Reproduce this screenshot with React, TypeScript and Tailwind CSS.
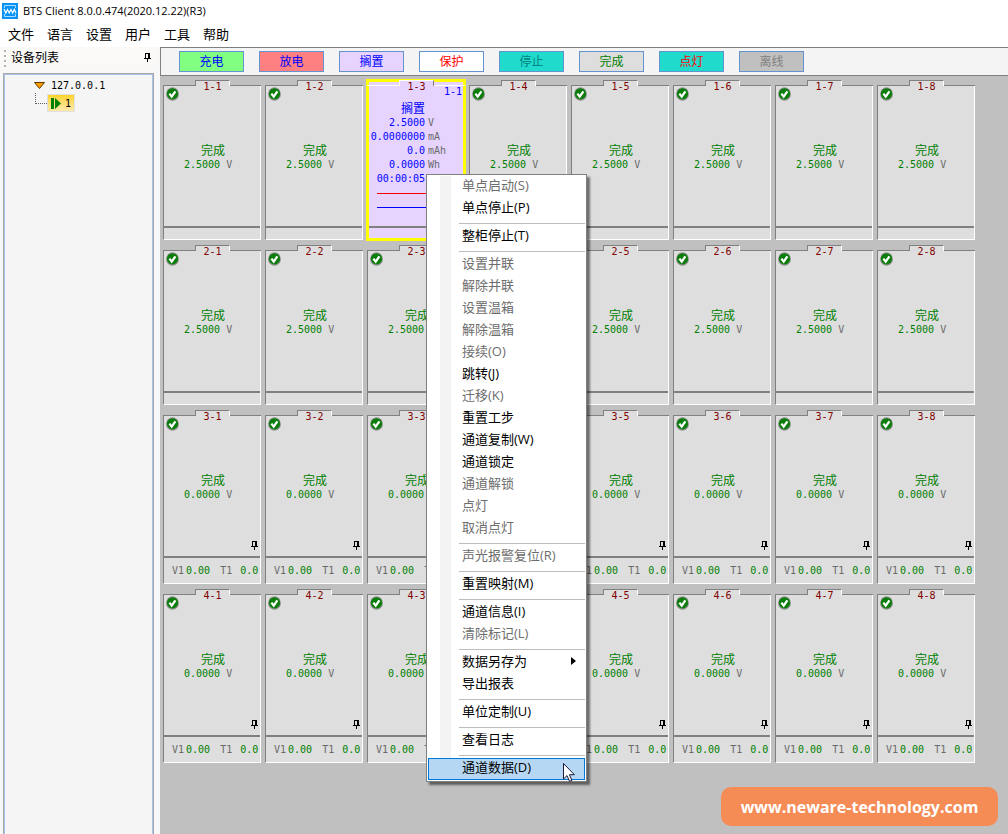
import type { ReactNode } from "react";

const MENUS = ["文件", "语言", "设置", "用户", "工具", "帮助"];

const STATES = [
  { label: "充电", style: "bg-[#80ff80] text-[#0000ff]" },
  { label: "放电", style: "bg-[#ff8080] text-[#0000ff]" },
  { label: "搁置", style: "bg-[#e6d4ff] text-[#0000ff]" },
  { label: "保护", style: "bg-white text-[#ff0000]" },
  { label: "停止", style: "bg-[#20dacb] text-[#008080]" },
  { label: "完成", style: "bg-[#dedede] text-[#008000]" },
  { label: "点灯", style: "bg-[#20dacb] text-[#ff0000]" },
  { label: "离线", style: "bg-[#c0c0c0] text-[#808080]" },
];

const ROWS = [
  { id: 1, voltage: "2.5000", aux: false },
  { id: 2, voltage: "2.5000", aux: false },
  { id: 3, voltage: "0.0000", aux: true },
  { id: 4, voltage: "0.0000", aux: true },
];

const COLUMNS = [1, 2, 3, 4, 5, 6, 7, 8];

const READINGS = [
  { name: "voltage", value: "2.5000", unit: "V" },
  { name: "current", value: "0.0000000", unit: "mA" },
  { name: "capacity", value: "0.0", unit: "mAh" },
  { name: "energy", value: "0.0000", unit: "Wh" },
  { name: "time", value: "00:00:05", unit: "" },
];

interface MenuEntry {
  label: string;
  disabled?: boolean;
  active?: boolean;
  submenu?: boolean;
}

// Each inner list is one group, groups are split by a separator
const MENU_GROUPS: MenuEntry[][] = [
  [{ label: "单点启动(S)", disabled: true }, { label: "单点停止(P)" }],
  [{ label: "整柜停止(T)" }],
  [
    { label: "设置并联", disabled: true },
    { label: "解除并联", disabled: true },
    { label: "设置温箱", disabled: true },
    { label: "解除温箱", disabled: true },
    { label: "接续(O)", disabled: true },
    { label: "跳转(J)" },
    { label: "迁移(K)", disabled: true },
    { label: "重置工步" },
    { label: "通道复制(W)" },
    { label: "通道锁定" },
    { label: "通道解锁", disabled: true },
    { label: "点灯", disabled: true },
    { label: "取消点灯", disabled: true },
  ],
  [{ label: "声光报警复位(R)", disabled: true }],
  [{ label: "重置映射(M)" }],
  [{ label: "通道信息(I)" }, { label: "清除标记(L)", disabled: true }],
  [{ label: "数据另存为", submenu: true }, { label: "导出报表" }],
  [{ label: "单位定制(U)" }],
  [{ label: "查看日志" }],
  [{ label: "通道数据(D)", active: true }],
];

function PinIcon() {
  return (
    <svg width="7" height="9" viewBox="0 0 7 9" shapeRendering="crispEdges" aria-hidden="true">
      <path d="M1 0h5v1H1zM1 0h1v5H1zM4 0h2v5H4zM0 5h7v1H0zM3 6h1v3H3z" fill="#000" />
    </svg>
  );
}

function CheckIcon() {
  return (
    <svg width="13" height="14" viewBox="0 0 13 14" aria-label="完成">
      <ellipse cx="6.5" cy="7" rx="6.4" ry="6.8" fill="#8f8f8f" />
      <circle cx="6.5" cy="6.8" r="5.6" fill="#0a7d0a" />
      <path d="M3.4 6.6l2.300 3L9.400 4.300" fill="none" stroke="#fff" strokeWidth="2.3" />
    </svg>
  );
}

function Logo() {
  return (
    <svg width="16" height="16" viewBox="0 0 16 16" aria-hidden="true">
      <rect width="16" height="16" fill="#0a93f5" />
      <path d="M2.5 5V2.5h11V5M2.5 11v2.5h11V11" fill="none" stroke="#a8dcff" />
      <path d="M2 6l1.800 4L5.500 6.500 7.200 10 9 6.500l1.700 3.500L12.300 6.500 14 10" fill="none" stroke="#fff" strokeWidth="1.2" />
    </svg>
  );
}

function CardFrame({ title, selected, children, footer }: {
  title: string;
  selected?: boolean;
  children: ReactNode;
  footer?: ReactNode;
}) {
  const fill = selected ? "bg-[#e6d4ff]" : "bg-[#dedede]";
  const line = selected ? "bg-white" : "bg-[#808080]";
  return (
    <article
      className={`flex w-[98px] shrink-0 flex-col ${
        selected ? "bg-[#e6d4ff] outline-3 -outline-offset-2 outline-[#ffff00]" : ""
      }`}
    >
      <header className="relative flex h-[6px] items-end">
        <div className={`h-px w-8 ${line}`} />
        <h2
          className={`h-[6px] w-[35px] border-t border-r border-l text-center text-[10px] leading-[12px] text-[#800000] ${fill} ${
            selected ? "border-l-white border-r-[#808080] border-t-white" : "border-[#808080] border-r-white"
          }`}
        >
          {title}
        </h2>
        <div className={`h-px flex-1 ${line}`} />
      </header>
      <div className={`flex flex-col border-r border-b border-l border-white border-l-[#808080] ${fill}`}>
        <div className="flex h-[140px] flex-col">{children}</div>
        <div className="border-t-2 border-[#808080]">{footer || <div className="h-[11px]" />}</div>
      </div>
    </article>
  );
}

function DoneCard({ title, voltage, aux }: { title: string; voltage: string; aux: boolean }) {
  return (
    <CardFrame
      title={title}
      footer={
        aux && (
          <div className="flex h-[25px] items-center pl-2 text-[10px] text-[#008000]">
            <span className="text-[#6a6a6a]">V1</span>
            <span className="ml-0.5">0.00</span>
            <span className="ml-[10px] text-[#6a6a6a]">T1</span>
            <span className="ml-2">0.0</span>
          </div>
        )
      }
    >
      <div className="h-[17px] pt-px pl-0.5">
        <CheckIcon />
      </div>
      <p className="mt-[41px] pl-0.5 text-center text-[12px] leading-[14px] text-[#008000]">完成</p>
      <p className="pl-5 text-[10px] leading-[14px] whitespace-pre text-[#008000]">
        {voltage} <span className="text-[#6a6a6a]">V</span>
      </p>
      {aux && (
        <div className="mt-auto self-end pr-0.5 pb-1.5">
          <PinIcon />
        </div>
      )}
    </CardFrame>
  );
}

function RestingCard({ title }: { title: string }) {
  return (
    <CardFrame title={title} selected>
      <p className="pr-0.5 text-right text-[10px] leading-[12px] text-[#0000ff]">1-1</p>
      <p className="mt-1 pr-1.5 text-center text-[12px] leading-[14px] text-[#0000ff]">搁置</p>
      {READINGS.map((item) => (
        <p key={item.name} className="flex gap-[3px] text-[10px] leading-[14px] text-[#0000ff]">
          <span className="flex w-[57px] justify-end">{item.value}</span>
          <span className="text-[#6a6a6a]">{item.unit}</span>
        </p>
      ))}
      <div className="mx-[9px] mt-[7px] h-px bg-[#ff0000]" />
      <div className="mx-[9px] mt-[13px] h-px bg-[#0000ff]" />
    </CardFrame>
  );
}

function ContextMenu() {
  return (
    <div
      role="menu"
      className="absolute top-[174px] left-[426px] w-[161px] border border-[#808080] bg-white py-px font-['Open_Sans','Noto_Sans_CJK_SC',sans-serif] text-[13px] shadow-[3px_3px_2px_rgba(0,0,0,0.5)]"
    >
      <div className="bg-linear-to-r from-white from-[13px] via-[#f3f3f3] via-[13px] to-[#f3f3f3] to-[24px] bg-size-[24px_100%] bg-no-repeat px-px">
        {MENU_GROUPS.map((group, index) => (
          <div key={group[0].label}>
            {index > 0 && (
              <div className="flex h-[6px] items-center pt-px pl-[31px]" role="separator">
                <div className="h-px w-full bg-[#bdbdbd]" />
              </div>
            )}
            {group.map((entry) => (
              <button
                key={entry.label}
                type="button"
                role="menuitem"
                disabled={entry.disabled}
                className={`flex h-[22px] w-full items-center justify-between border pr-2 pb-1 pl-[33px] leading-4 whitespace-nowrap ${
                  entry.disabled ? "text-[#6d6d6d]" : "text-black"
                } ${entry.active ? "border-[#0078d7] bg-[#b5d7f3]" : "border-transparent"}`}
              >
                {entry.label}
                {entry.submenu && (
                  <svg width="5" height="8" viewBox="0 0 5 8" aria-hidden="true">
                    <path d="M0 0l5 4-5 4z" />
                  </svg>
                )}
              </button>
            ))}
          </div>
        ))}
      </div>
    </div>
  );
}

function DeviceList() {
  return (
    <aside className="flex w-40 shrink-0 flex-col bg-[#f8f8f8]">
      <header className="mr-[3px] flex h-[23px] items-center bg-[#faf9f7] pr-1.5 pb-0.5 pl-1 text-[12px]">
        <svg width="2" height="18" viewBox="0 0 2 18" aria-hidden="true">
          <path d="M0 1h2v2H0zM0 6h2v2H0zM0 11h2v2H0zM0 16h2v2H0z" fill="#b5b3ae" />
        </svg>
        <h1 className="ml-[5px] flex-1">设备列表</h1>
        <button type="button" aria-label="固定">
          <PinIcon />
        </button>
      </header>
      <div className="mt-[3px] mr-1.5 ml-[3px] flex flex-1 flex-col border border-b-0 border-[#a6a6a6]">
        <div className="flex-1 border border-b-0 border-[#a9c4ea] bg-[#f5f5f5] pt-0.5 pl-[29px] text-[10px]">
          <div className="flex h-4 items-center gap-1.5">
            <svg width="11" height="7" viewBox="0 0 11 7" aria-hidden="true">
              <path d="M.5.5h10L5.500 6.500z" fill="#ff9c00" stroke="#5a3a00" />
            </svg>
            <span>127.0.0.1</span>
          </div>
          <div className="flex pl-px">
            <div className="h-[11px] w-3 border-b border-l border-dotted border-[#606060]" />
            <button
              type="button"
              className="mt-px flex h-[18px] w-7 items-center justify-between border border-[#e0e0e0] bg-linear-to-b from-[#ffd21c] to-[#ffe9a8] px-[3px]"
            >
              <svg width="10" height="11" viewBox="0 0 10 11" aria-hidden="true">
                <path d="M0 0h3v11H0zM4 0l6 5.500L4 11z" fill="#008000" />
              </svg>
              1
            </button>
          </div>
        </div>
      </div>
    </aside>
  );
}

export default function App() {
  return (
    <div className="relative flex min-h-screen flex-col overflow-hidden bg-white font-['DejaVu_Sans_Mono','Noto_Sans_CJK_SC',monospace] text-black">
      <div className="flex h-[22px] items-center gap-[5px] pl-0.5 font-['Open_Sans',sans-serif] text-[11px]">
        <Logo />
        BTS Client 8.0.0.474(2020.12.22)(R3)
      </div>
      <nav className="flex h-[25px] items-center gap-[13px] pb-0.5 pl-2 font-['Noto_Sans_CJK_SC',sans-serif] text-[13px]">
        {MENUS.map((item) => (
          <button key={item} type="button">
            {item}
          </button>
        ))}
      </nav>

      <div className="flex flex-1">
        <DeviceList />
        <main className="min-w-0 flex-1 bg-[#c0c0c0]">
          <div className="flex h-[29px] items-center gap-[15px] border-y border-l border-[#808080] bg-[#f4f4f4] pl-[18px]">
            {STATES.map((state) => (
              <button
                key={state.label}
                type="button"
                className={`flex h-[21px] w-[65px] items-center justify-center border border-[#6593cf] text-[12px] ${state.style}`}
              >
                {state.label}
              </button>
            ))}
          </div>
          <div className="flex flex-col gap-[5px] pt-1 pl-[3px]">
            {ROWS.map((row) => (
              <div key={row.id} className="flex gap-1">
                {COLUMNS.map((col) => {
                  const title = `${row.id}-${col}`;
                  return title === "1-3" ? (
                    <RestingCard key={title} title={title} />
                  ) : (
                    <DoneCard key={title} title={title} voltage={row.voltage} aux={row.aux} />
                  );
                })}
              </div>
            ))}
          </div>
        </main>
      </div>

      <ContextMenu />

      <svg className="absolute top-[763px] left-[563px]" width="12" height="19" viewBox="0 0 12 19" aria-hidden="true">
        <path d="M.5.5v15.500l3.500-3.400 2.600 5.700 2.300-1-2.500-5.600h5z" fill="#fff" stroke="#1b1b3a" />
      </svg>

      <a
        href="https://www.neware-technology.com"
        className="absolute right-2.5 bottom-2 flex h-[39px] w-[277px] items-center justify-center rounded-[10px] bg-[#f58b55] font-['Open_Sans',sans-serif] text-[16px] font-bold text-white"
      >
        www.neware-technology.com
      </a>
    </div>
  );
}
